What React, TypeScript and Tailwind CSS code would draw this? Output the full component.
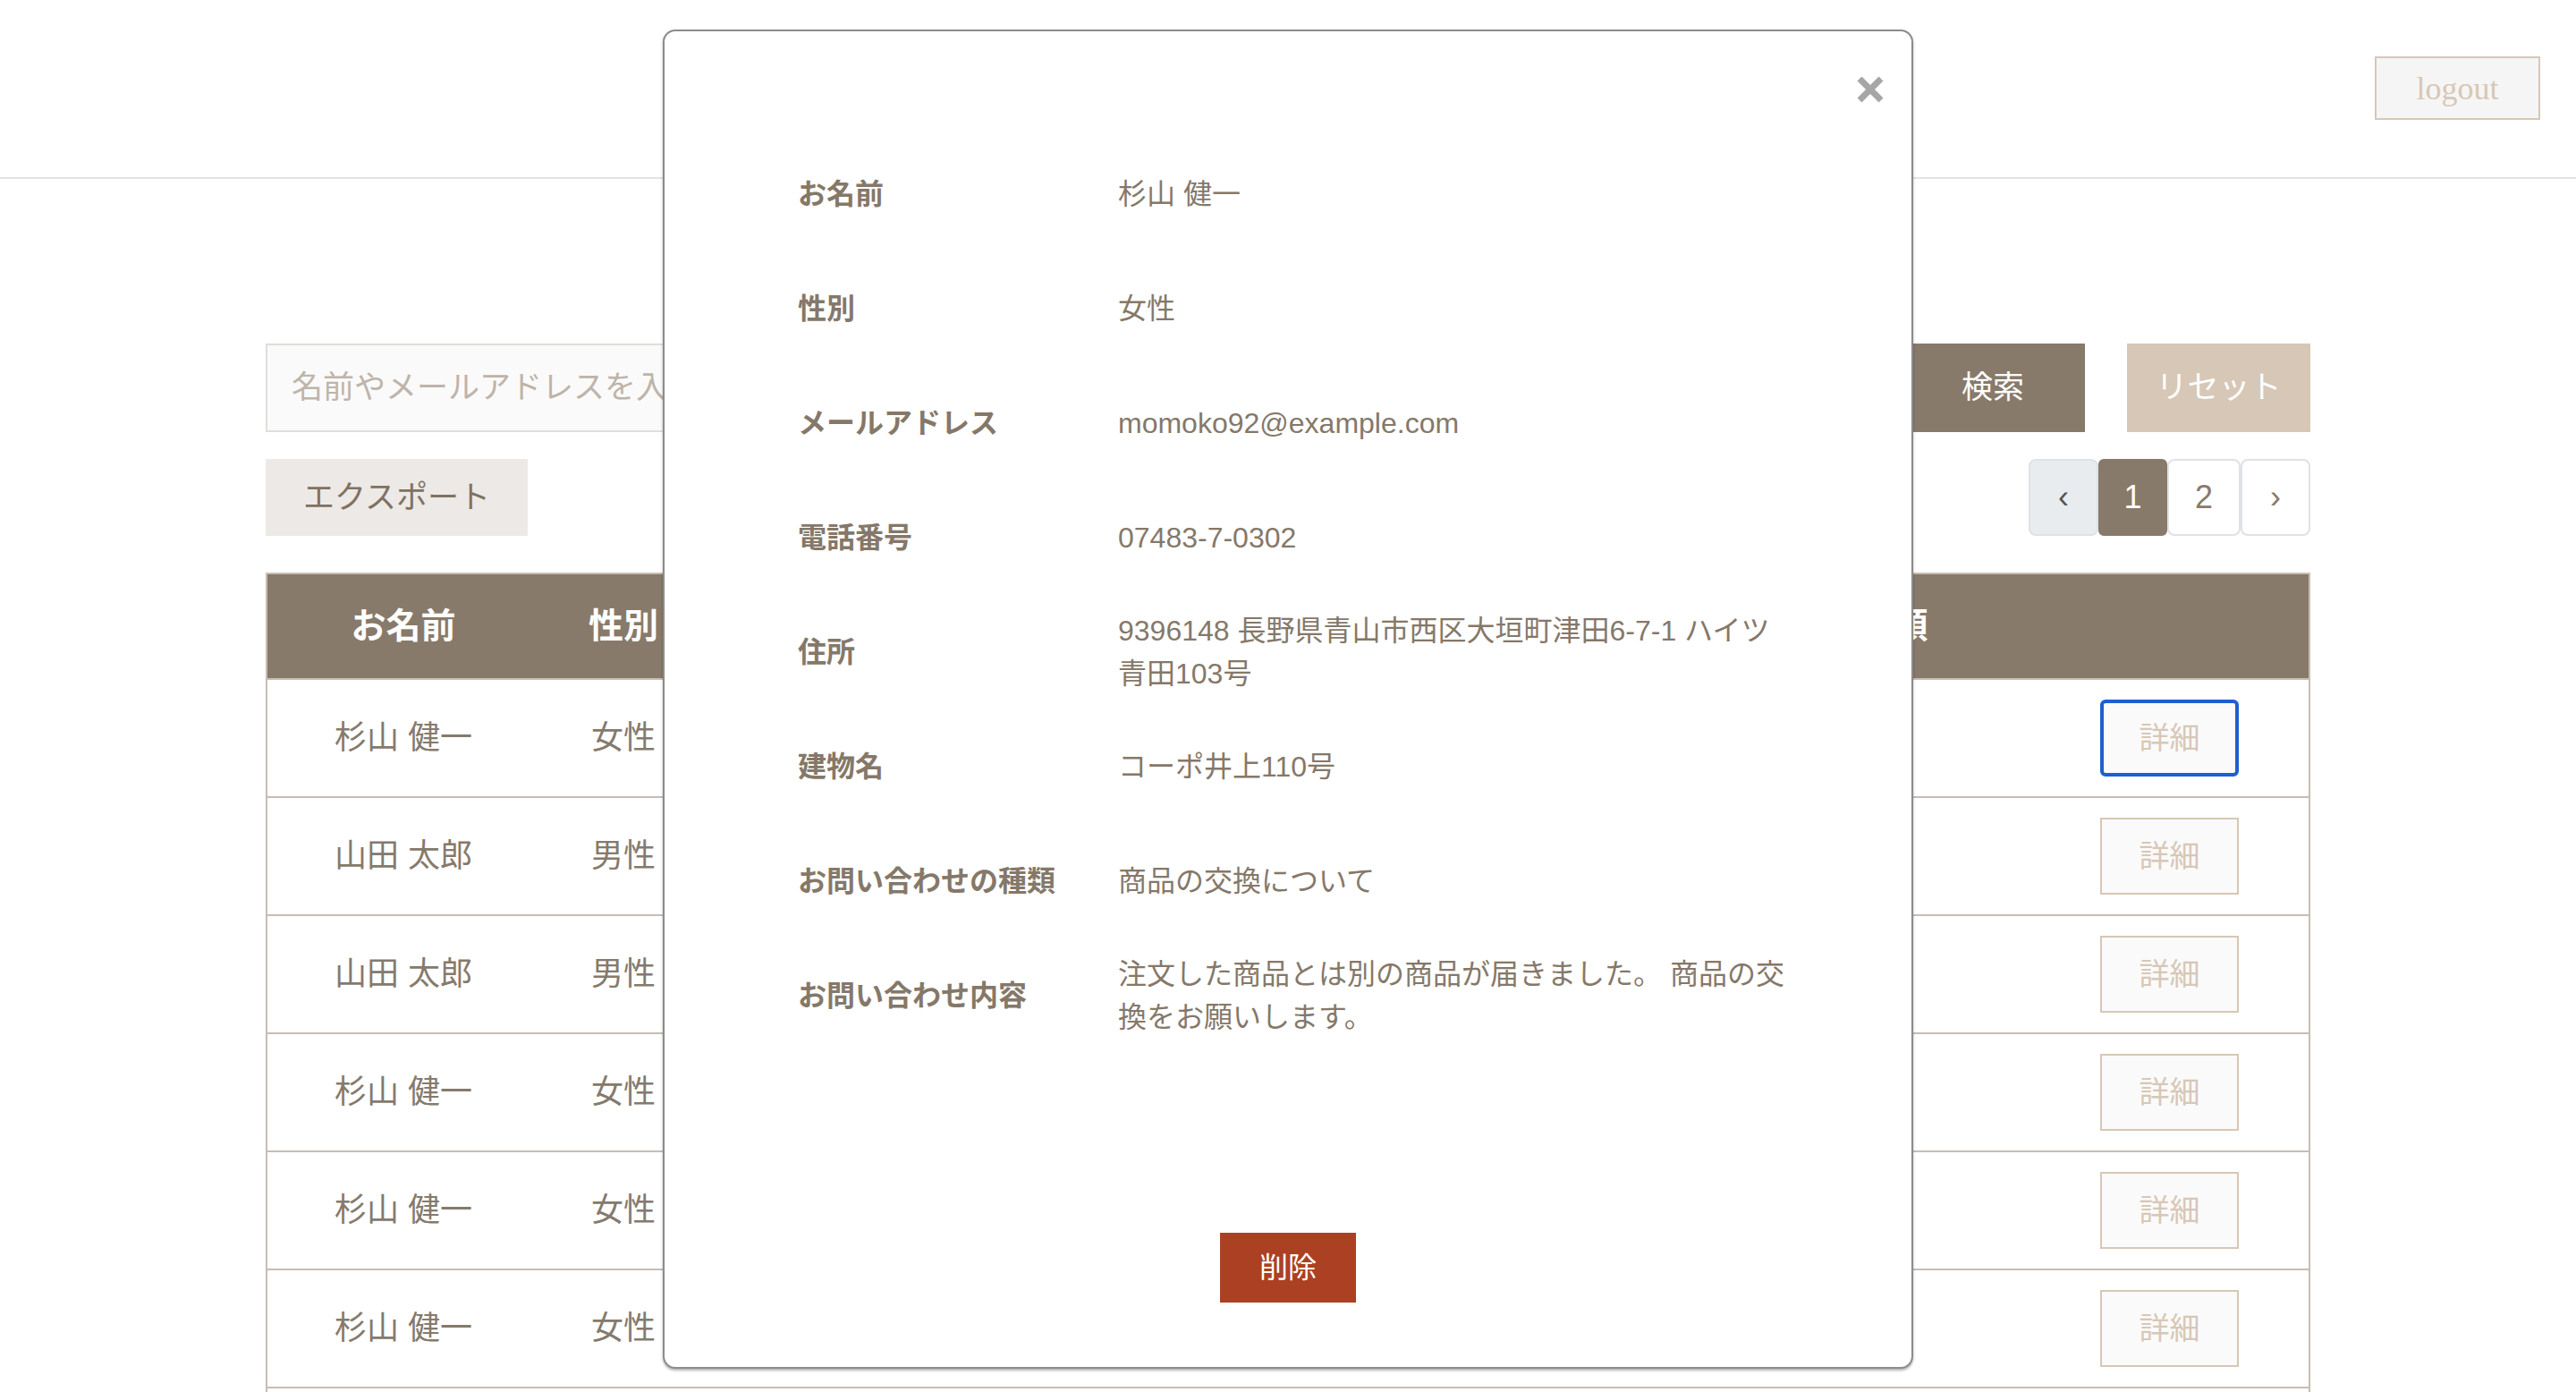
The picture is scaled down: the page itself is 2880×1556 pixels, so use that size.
import React from "react";

const rows = [
  { name: "杉山 健一", gender: "女性", email: "momoko92@example.com" },
  { name: "山田 太郎", gender: "男性", email: "taro.yamada@example.com" },
  { name: "山田 太郎", gender: "男性", email: "taro.yamada@example.com" },
  { name: "杉山 健一", gender: "女性", email: "momoko92@example.com" },
  { name: "杉山 健一", gender: "女性", email: "momoko92@example.com" },
  { name: "杉山 健一", gender: "女性", email: "momoko92@example.com" },
  { name: "杉山 健一", gender: "女性", email: "momoko92@example.com" },
];

const details = [
  { label: "お名前", value: ["杉山 健一"] },
  { label: "性別", value: ["女性"] },
  { label: "メールアドレス", value: ["momoko92@example.com"] },
  { label: "電話番号", value: ["07483-7-0302"] },
  { label: "住所", value: ["9396148 長野県青山市西区大垣町津田6-7-1 ハイツ", "青田103号"] },
  { label: "建物名", value: ["コーポ井上110号"] },
  { label: "お問い合わせの種類", value: ["商品の交換について"] },
  {
    label: "お問い合わせ内容",
    value: ["注文した商品とは別の商品が届きました。 商品の交", "換をお願いします。"],
  },
];

const App = () => {
  return (
    <div className="relative min-h-screen bg-white font-['Liberation_Sans','Noto_Sans_CJK_JP',sans-serif] text-[#857a6c]">
      {/* Header */}
      <header className="h-[200px] border-b-2 border-[#e2e2e2] flex items-start justify-end pr-[40px] pt-[63px]">
        <button className="w-[185px] h-[71px] border-2 border-[#d7c7b6] bg-[#f5f5f5] text-[#d7c7b6] text-[36px] font-['Liberation_Serif',serif]">
          logout
        </button>
      </header>

      <main className="mx-[297px] pt-[184px]">
        {/* Search */}
        <div className="flex gap-[47px] h-[99px]">
          <input
            className="flex-1 border-2 border-[#e2ddd8] bg-[#fafafa] pl-[27px] text-[35px] placeholder:text-[#beb4a9] outline-none"
            placeholder="名前やメールアドレスを入力してください"
          />
          <button className="w-[206px] bg-[#887a6a] text-white text-[35px]">検索</button>
          <button className="w-[205px] bg-[#d7c7b6] text-white text-[35px]">リセット</button>
        </div>

        {/* Export + pagination */}
        <div className="mt-[30px] flex items-center justify-between h-[86px]">
          <button className="w-[293px] h-[86px] bg-[#ede9e6] text-[#7f7262] text-[35px]">エクスポート</button>
          <div className="flex h-[86px]">
            <span className="w-[78px] flex items-center justify-center border-2 border-[#dee2e6] rounded-[8px] bg-[#e9ecef] text-[#555] text-[36px]">‹</span>
            <span className="w-[77px] flex items-center justify-center border-2 border-[#887a6a] rounded-[6px] bg-[#887a6a] text-white text-[36px]">1</span>
            <span className="w-[82px] flex items-center justify-center border-2 border-[#dee2e6] rounded-[8px] bg-white text-[#887a6a] text-[36px]">2</span>
            <span className="w-[78px] flex items-center justify-center border-2 border-[#dee2e6] rounded-[8px] bg-white text-[#887a6a] text-[36px]">›</span>
          </div>
        </div>

        {/* Table */}
        <div className="mt-[41px] border-x-2 border-t-2 border-[#c8bdb3]">
          <div className="flex h-[118px] items-center bg-[#887a6a] text-white font-bold text-[39px] border-b-2 border-[#c8bdb3]">
            <div className="w-[304px] text-center">お名前</div>
            <div className="w-[188px] text-center">性別</div>
            <div className="w-[899px] text-center">メールアドレス</div>
            <div className="w-[580px] text-center">お問い合わせの種類</div>
            <div className="flex-1" />
          </div>
          {rows.map((r, i) => (
            <div key={i} className="flex h-[132px] items-center border-b-2 border-[#c8bdb3] text-[36px]">
              <div className="w-[304px] text-center">{r.name}</div>
              <div className="w-[188px] text-center">{r.gender}</div>
              <div className="w-[899px] text-center">{r.email}</div>
              <div className="w-[580px] text-center">商品の交換について</div>
              <div className="flex-1 flex justify-center">
                <button
                  className={
                    i === 0
                      ? "w-[155px] h-[86px] border-[4px] border-[#1f5fcf] rounded-[6px] bg-[#fafafa] text-[#d7c7b6] text-[34px]"
                      : "w-[155px] h-[86px] border-2 border-[#d7c7b6] bg-[#fafafa] text-[#d7c7b6] text-[34px]"
                  }>
                  詳細
                </button>
              </div>
            </div>
          ))}
        </div>
      </main>

      {/* Modal */}
      <div className="absolute inset-x-0 top-[33px] flex justify-center">
        <div className="relative w-[1398px] bg-white border-2 border-[#8c8c8c] rounded-[14px] shadow-[0_2px_3px_rgba(0,0,0,0.3)] pt-[118px] pb-[72px] text-[#857869]">
          <button className="absolute top-[49px] right-[30px] w-[32px] h-[32px]">
            <svg viewBox="0 0 32 32" width="32" height="32">
              <path d="M4 4 L28 28 M28 4 L4 28" stroke="#a6a6a6" strokeWidth="7" />
            </svg>
          </button>

          {details.map((d) => (
            <div key={d.label} className="flex items-center h-[128px] pl-[149px]">
              <div className="w-[358px] font-bold text-[32px]">{d.label}</div>
              <div className="text-[32px] leading-[48px]">
                {d.value.map((line, j) => (
                  <div key={j}>{line}</div>
                ))}
              </div>
            </div>
          ))}

          <div className="mt-[201px] flex justify-center">
            <button className="w-[152px] h-[78px] bg-[#ab4122] text-white text-[32px]">削除</button>
          </div>
        </div>
      </div>
    </div>
  );
};

export default App;
